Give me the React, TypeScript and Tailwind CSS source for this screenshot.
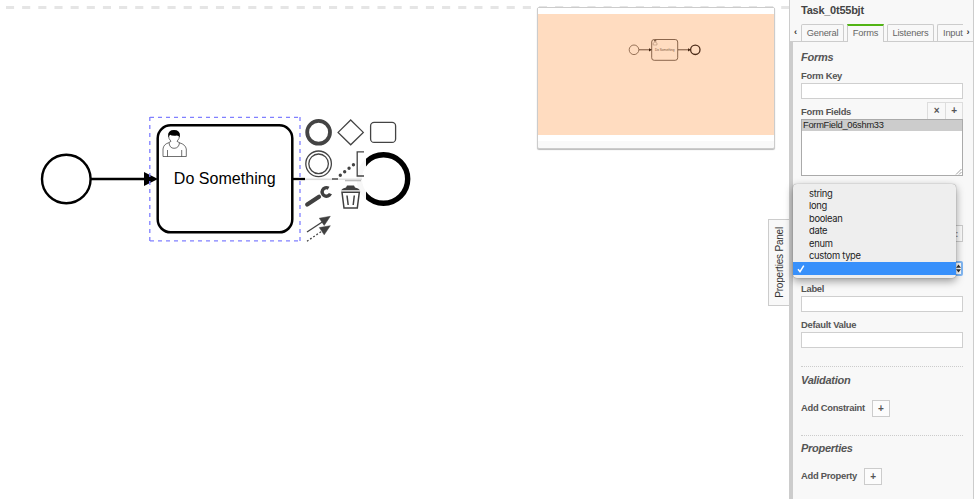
import React from "react";

function Input() {
  return <div className="h-4 w-[162px] border border-[#cfcfcf] bg-white" />;
}

function PlusButton() {
  return (
    <button className="flex h-[17px] w-[18px] items-center justify-center border border-[#ccc] bg-[#fcfcfc] text-[10px] font-bold text-[#555]">
      +
    </button>
  );
}

function UserTaskIcon() {
  return (
    <g fill="none" stroke="#333" strokeWidth="0.7">
      <path d="M163 156.5 V149 Q163.5 144.3 168.5 142.8 L171 141.3 Q168.5 139 168.5 135.5 Q168.5 130.5 174 130.5 Q179.5 130.5 179.5 135.5 Q179.5 139 177 141.3 L179.5 142.8 Q185.5 144.5 186.3 149 V156.5 Z" fill="#fff" />
      <path d="M169 142.5 Q169.5 148.3 174 148.3 Q179 148.3 179.5 142.5 M167.5 150 V156.5 M181.7 150 V156.5" />
      <path d="M168.4 137.5 Q167 130.3 174 130.1 Q181 130.3 179.7 137.5 Q178.5 135 175.5 135.8 Q171.5 136 170 134.8 Z" fill="#000" stroke="none" />
    </g>
  );
}

function Diagram() {
  return (
    <svg className="absolute left-0 top-0" width="789" height="499" viewBox="0 0 789 499">
      <path d="M6 7.5 H789" stroke="#e5e5e5" strokeWidth="3" strokeDasharray="8.1 8.05" />
      <circle cx="66.3" cy="179" r="24.3" fill="#fff" stroke="#000" strokeWidth="2.4" />
      <path d="M91 179 H146" stroke="#000" strokeWidth="2.3" />
      <rect x="157.7" y="125.3" width="134.6" height="107" rx="13" fill="#fff" stroke="#000" strokeWidth="2.5" />
      <path d="M144 172 L158 179 L144 186 Z" fill="#000" />
      <path d="M150 117.4 H299.8 M150 240.8 H299.8 M149.8 117 V241 M300 117 V241" fill="none" stroke="#8080ff" strokeWidth="1.3" strokeDasharray="4 4" />
      <UserTaskIcon />
      <text x="173.8" y="183.6" fontSize="16" textLength="101.8" className="font-['Liberation_Sans',sans-serif]">Do Something</text>
      <path d="M293 179 H305" stroke="#000" strokeWidth="2.3" />
      <path d="M305 179.3 H333" stroke="#ddd" strokeWidth="1.6" />
      <path d="M332 179 H338" stroke="#666" strokeWidth="1.8" />
      <circle cx="383.5" cy="179" r="24.2" fill="#fff" stroke="#000" strokeWidth="5.4" />
      <path d="M351 148 H366 V211 H351 Z" fill="#fff" fillOpacity="0.97" />
      <path d="M338 179.2 H362" stroke="#ddd" strokeWidth="1.3" />
      <path d="M345 180.6 H361" stroke="#bbb" strokeWidth="1.4" />

      <g fill="none" stroke="#444" strokeWidth="1.3">
        <circle cx="318.6" cy="132.3" r="11.4" strokeWidth="3.8" />
        <path d="M350.7 120 L363.3 132.4 L350.7 144.8 L338.1 132.4 Z" />
        <rect x="370.6" y="122.4" width="25" height="20" rx="3.5" />
        <circle cx="318.6" cy="163.8" r="12.8" />
        <circle cx="318.6" cy="163.8" r="9.8" />
        <path d="M364 151.8 H357.2 V176 H364" />
        <path d="M340.3 175.2 L354 164.3" strokeWidth="3.4" strokeLinecap="round" strokeDasharray="0 5.6" />
      </g>
      <path d="M307.2 204.6 L319 196.8" stroke="#404040" strokeWidth="4.2" strokeLinecap="round" />
      <path d="M328.6 188.2 A4.3 4.3 0 1 0 330.4 193.6" fill="none" stroke="#404040" strokeWidth="3.4" />
      <path d="M341 190.2 Q342.5 187.8 346 187.4 L347 185.5 H354 L355 187.4 Q358.5 187.8 360 190.2 Z" fill="#404040" />
      <path d="M342 192.3 H359.3 L357.3 208 H344 Z M347 195.5 L348.2 205 M354.3 195.5 L353.2 205" fill="none" stroke="#404040" strokeWidth="1.5" />
      <g stroke="#404040" strokeWidth="1.3" fill="#404040">
        <path d="M307 232 L323 221.5" />
        <path d="M330.3 216.3 L319.3 218.2 L324.2 225.5 Z" strokeWidth="0.5" />
        <path d="M307 241.3 L322 231" strokeDasharray="1.8 2" />
        <path d="M330.3 225.7 L319.3 227.6 L324.2 234.8 Z" strokeWidth="0.5" />
      </g>
    </svg>
  );
}

function Minimap() {
  return (
    <div className="absolute left-[537px] top-[7px] flex h-[142px] w-[238px] flex-col rounded-[2px] border border-[#ccc] bg-[#f9f9f9] shadow-[0_1px_1px_#bbb]">
      <div className="h-[6px] bg-white" />
      <div className="h-[121px] bg-[#ffdcc0]">
        <svg width="236" height="121" viewBox="538 14 236 121" fill="none" stroke="#8b664c">
          <circle cx="634" cy="49.8" r="4.8" strokeWidth="0.9" />
          <rect x="651.7" y="39.5" width="26" height="20.8" rx="2.5" strokeWidth="1" />
          <path d="M639 49.8 H650 M678 49.8 H689" stroke="#654028" strokeWidth="0.9" />
          <path d="M649 48.2 L652 49.8 L649 51.4 Z M688 48.2 L691 49.8 L688 51.4 Z" fill="#422310" stroke="none" />
          <circle cx="695.3" cy="49.8" r="4.7" stroke="#4c2b18" strokeWidth="1.3" />
          <path d="M653.2 45 V43 L655 42 L657 43 V45 Z" strokeWidth="0.4" />
          <path d="M654 40.8 H656.3" stroke="#4c2b18" strokeWidth="1" />
          <text x="655" y="51" fontSize="3.2" textLength="19.5" fill="#80583d" stroke="none" className="font-['Liberation_Sans',sans-serif]">Do Something</text>
        </svg>
      </div>
      <div className="h-[6px] bg-white" />
    </div>
  );
}

function TypeMenu() {
  return (
    <div className="absolute left-[793px] top-[184px] h-[94px] w-[163px] rounded-[4px] bg-[#eeeeee] pt-[4px] text-[9.4px] leading-[12.4px] text-[#222] shadow-[0_3px_9px_rgba(0,0,0,0.4),0_0_1px_rgba(0,0,0,0.5)] font-[Inter,sans-serif]">
      {["string", "long", "boolean", "date", "enum", "custom type"].map((t) => (
        <div key={t} className="pl-4 tracking-[-0.3px]">{t}</div>
      ))}
      <div className="flex h-[13px] items-center bg-[#3790fb] pl-[4px]">
        <svg width="8" height="8" viewBox="0 0 8 8" fill="none" stroke="#fff" strokeWidth="1.5">
          <path d="M1 4.2 L3 6.7 L6.8 0.7" />
        </svg>
      </div>
    </div>
  );
}

export default function App() {
  return (
    <div className="relative flex h-[499px] w-[974px] overflow-hidden bg-white font-['Liberation_Sans',Arial,sans-serif]">
      <main className="relative w-[789px] shrink-0">
        <Diagram />
        <Minimap />
        <div className="absolute left-[768px] top-[219px] flex h-[87px] w-[22px] items-center justify-center border border-[#ccc] bg-[#f8f8f8]">
          <span className="rotate-180 whitespace-nowrap text-[10px] tracking-[-0.2px] text-[#333] [writing-mode:vertical-rl]">Properties Panel</span>
        </div>
      </main>

      <aside className="flex w-[185px] shrink-0 flex-col border-r border-[#ccc] bg-[#f8f8f8] text-[#555]">
        <header className="flex h-[42px] flex-col border-l border-[#ccc]">
          <h1 className="h-6 pl-[11px] pt-[3px] text-[11px] font-bold leading-[14px] tracking-[-0.25px] text-[#444]">Task_0t55bjt</h1>
          <nav className="flex h-[18px] items-end border-b border-[#ccc] text-[9.3px] tracking-[-0.2px] text-[#666]">
            <span className="flex h-[17px] w-[11px] items-center justify-center font-bold text-[#333]">‹</span>
            <span className="flex h-[17px] w-[43px] items-center justify-center rounded-t-[2px] border border-b-0 border-[#ccc] pt-px">General</span>
            <span className="z-10 -mb-px ml-[3px] flex h-[18px] w-[37px] items-center justify-center border border-b-0 border-t-2 border-[#ccc] border-t-[#52b415] bg-[#f8f8f8] pb-px">Forms</span>
            <span className="ml-[3px] flex h-[17px] w-[47px] items-center justify-center rounded-t-[2px] border border-b-0 border-[#ccc] pt-px">Listeners</span>
            <span className="ml-[3px] flex h-[17px] w-[26px] items-center rounded-tl-[2px] border-l border-t border-[#ccc] pl-[5px] pt-px">Input</span>
            <span className="flex h-[17px] w-[10px] items-center justify-center font-bold text-[#333]">›</span>
          </nav>
        </header>

        <section className="flex h-[457px] flex-col border-l-4 border-[#ccc] pl-2 text-[9.4px] font-bold leading-3 tracking-[-0.28px]">
          <h2 className="mt-[8px] h-[14px] text-[11px] italic leading-[14px]">Forms</h2>
          <label className="mt-[6px] h-[13px]">Form Key</label>
          <Input />
          <div className="mt-[3px] flex h-[17px] items-end justify-between pr-[10px]">
            <span className="pb-[1px]">Form Fields</span>
            <div className="flex h-[17px] border border-b-0 border-[#ddd] text-[10px] text-[#555]">
              <span className="flex w-[17px] items-center justify-center">×</span>
              <span className="flex w-[17px] items-center justify-center border-l border-[#ddd]">+</span>
            </div>
          </div>
          <div className="relative h-[57px] w-[162px] border border-[#aaa] bg-white">
            <div className="h-[11px] bg-[#ccc] pl-[1px] text-[9.3px] font-normal leading-[11px] tracking-[-0.27px] text-[#222]">FormField_06shm33</div>
            <svg className="absolute bottom-0 right-0" width="7" height="7" viewBox="0 0 7 7" stroke="#888" strokeWidth="0.8">
              <path d="M1 6.5 L6.5 1 M4 6.5 L6.5 4" />
            </svg>
          </div>
          <div className="mt-[49px] flex h-[17px] w-[162px] items-center justify-end border border-[#ccc] bg-[#fcfcfc] pr-[4px] text-[#888]">:</div>
          <div className="mt-[19px] flex h-[15px] w-[162px] items-center justify-end rounded-[2px] border-2 border-[#82b8f4] bg-white">
            <svg width="5" height="9" viewBox="0 0 5 9" fill="#333">
              <path d="M0 3.7 L2.5 0.5 L5 3.7 Z M0 5.3 L2.5 8.5 L5 5.3 Z" />
            </svg>
          </div>
          <label className="mt-[7px] h-[13px]">Label</label>
          <Input />
          <label className="mt-[7px] h-[13px]">Default Value</label>
          <Input />
          <div className="mt-[18px] w-[162px] border-t border-dotted border-[#ccc]" />
          <h2 className="mt-[6px] h-[14px] text-[11px] italic leading-[14px]">Validation</h2>
          <div className="mt-[13px] flex h-[17px] items-center gap-[7px]">
            <span className="-mt-[2px]">Add Constraint</span>
            <PlusButton />
          </div>
          <div className="mt-[18px] w-[162px] border-t border-dotted border-[#ccc]" />
          <h2 className="mt-[5px] h-[14px] text-[11px] italic leading-[14px]">Properties</h2>
          <div className="mt-[13px] flex h-[17px] items-center gap-[7px]">
            <span className="-mt-[2px]">Add Property</span>
            <PlusButton />
          </div>
        </section>
      </aside>
      <TypeMenu />
    </div>
  );
}
